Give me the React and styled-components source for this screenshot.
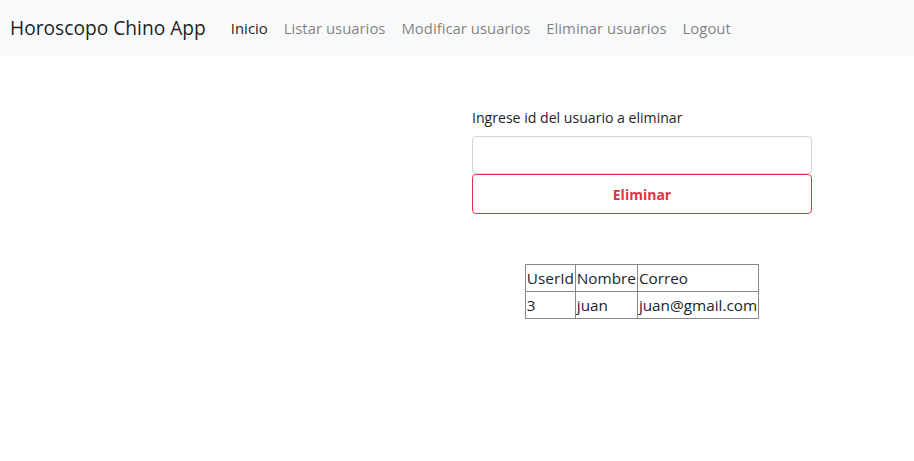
import React from 'react'
import styled, { createGlobalStyle } from 'styled-components'

const GlobalStyle = createGlobalStyle`
  body {
    margin: 0;
    font-family: "Open Sans", "Liberation Sans", sans-serif;
    font-size: 16px;
    color: #212529;
    background: #fff;
  }
`;

const links = [
  { label: 'Inicio', active: true },
  { label: 'Listar usuarios' },
  { label: 'Modificar usuarios' },
  { label: 'Eliminar usuarios' },
  { label: 'Logout' },
];

const App = () => {
  return (
    <>
      <GlobalStyle />
      <Navbar>
        <Brand>Horoscopo Chino App</Brand>
        <NavList>
          {links.map((l) => (
            <NavLink key={l.label} $active={l.active}>{l.label}</NavLink>
          ))}
        </NavList>
      </Navbar>
      <Row>
        <div />
        <Column>
          <Form>
            <Label htmlFor='userid'>Ingrese id del usuario a eliminar</Label>
            <Input id='userid' type='text' />
            <DangerButton type='button'>Eliminar</DangerButton>
            <Table>
              <thead>
                <tr>
                  <Cell as='th'>UserId</Cell>
                  <Cell as='th'>Nombre</Cell>
                  <Cell as='th'>Correo</Cell>
                </tr>
              </thead>
              <tbody>
                <tr>
                  <Cell>3</Cell>
                  <Cell>juan</Cell>
                  <Cell>juan@gmail.com</Cell>
                </tr>
              </tbody>
            </Table>
          </Form>
        </Column>
      </Row>
    </>
  )
}

export default App

const Navbar = styled.nav`
  display: flex;
  align-items: center;
  height: 56px;
  padding: 0 10px;
  background: #f8f9fa;
  box-sizing: border-box;
`;

const Brand = styled.div`
  font-size: 19.2px;
  line-height: 30px;
  color: rgba(0, 0, 0, 0.9);
  margin-right: 17px;
  white-space: nowrap;
`;

const NavList = styled.div`
  display: flex;
  align-items: center;
`;

const NavLink = styled.a`
  padding: 8px;
  font-size: 14.9px;
  line-height: 24px;
  color: ${(p) => (p.$active ? 'rgba(0, 0, 0, 0.9)' : 'rgba(0, 0, 0, 0.5)')};
  cursor: pointer;
  white-space: nowrap;
`;

const Row = styled.div`
  display: grid;
  grid-template-columns: 1fr 1fr;
  padding-top: 50px;
`;

const Column = styled.div`
  padding: 0 15px;
`;

const Form = styled.div`
  width: 340px;
  display: flex;
  flex-direction: column;
`;

const Label = styled.label`
  font-size: 14.1px;
  line-height: 24px;
  margin-bottom: 6px;
`;

const Input = styled.input`
  height: 38px;
  box-sizing: border-box;
  border: 1px solid #ced4da;
  border-radius: 4px;
  padding: 6px 12px;
  font: inherit;
`;

const DangerButton = styled.button`
  height: 40px;
  box-sizing: border-box;
  border: 1px solid #dc3545;
  border-radius: 4px;
  background: transparent;
  color: #dc3545;
  font-family: inherit;
  font-size: 14px;
  font-weight: 700;
  cursor: pointer;
`;

const Table = styled.table`
  margin: 50px auto 0;
  border-collapse: collapse;
  border: 1px solid #222;
`;

const Cell = styled.td`
  border: 1px solid #888;
  padding: 0 1px;
  height: 26px;
  font-size: 15.3px;
  font-weight: 400;
  text-align: left;
  color: #212529;
`;
